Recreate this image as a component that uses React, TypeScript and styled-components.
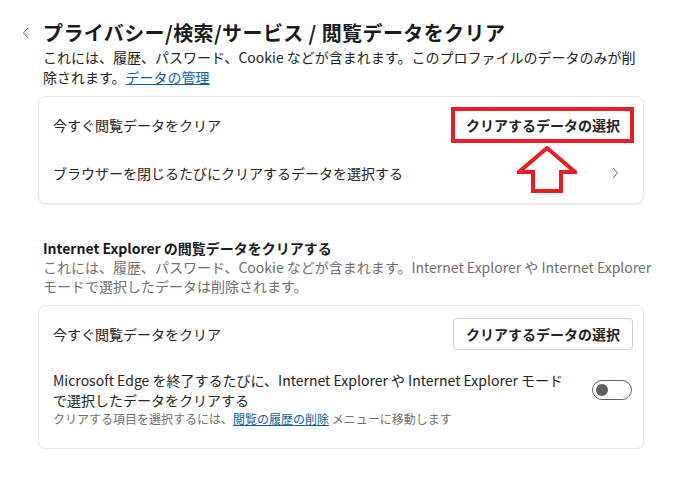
import styled, {createGlobalStyle} from 'styled-components';

const GlobalStyle = createGlobalStyle`
  body {
    margin: 0;
    background: #fff;
    font-family: "Segoe UI", "Noto Sans CJK JP", sans-serif;
    color: #242424;
  }
`;

const Page = styled.main`
  width: 606px;
  padding: 19px 0 0 38px;
`;

const Header = styled.header`
  display: flex;
  align-items: center;
  gap: 13px;
  margin-left: -16px;
`;

const BackIcon = styled.svg`
  width: 8px;
  height: 12px;
  flex: none;
`;

const Title = styled.h1`
  margin: 0;
  font-size: 20px;
  line-height: 28px;
  font-weight: 700;
  letter-spacing: 0.4px;
  color: #1b1b1b;
`;

const Description = styled.p<{muted?: boolean}>`
  margin: 0 ${p => (p.muted ? '-8px' : '0')} 9px 5px;
  font-size: 14px;
  line-height: ${p => (p.muted ? '19px' : '20px')};
  color: ${p => (p.muted ? '#707070' : '#242424')};
`;

const Link = styled.a`
  color: #115ea3;
  text-decoration: underline;
  cursor: pointer;
`;

const SectionTitle = styled.h2`
  margin: 34px 0 0 5px;
  font-size: 14px;
  line-height: 20px;
  font-weight: 700;
  color: #1b1b1b;
`;

const Card = styled.section`
  background: #fff;
  border: 1px solid #e6e6e6;
  border-radius: 8px;
  box-shadow: 0 1px 2px rgba(0, 0, 0, 0.08);
  padding: 4px 0 6px;
`;

const Row = styled.div`
  display: flex;
  align-items: center;
  justify-content: space-between;
  min-height: 48px;
  padding: 0 10px 0 14px;
  font-size: 14px;
  line-height: 20px;
`;

const ToggleRow = styled.div`
  display: flex;
  align-items: flex-start;
  justify-content: space-between;
  gap: 24px;
  padding: 12px 10px 15px 14px;
  font-size: 14px;
  line-height: 20px;
`;

const RowText = styled.div`
  flex: 1;
`;

const SubText = styled.div`
  font-size: 12px;
  line-height: 17px;
  color: #707070;
`;

const Anchor = styled.div`
  position: relative;
`;

const Button = styled.button`
  width: 180px;
  height: 32px;
  background: #fff;
  border: 1px solid #d1d1d1;
  border-radius: 4px;
  font-family: inherit;
  font-size: 14px;
  font-weight: 700;
  color: #242424;
  cursor: pointer;
`;

const Highlight = styled.div`
  position: absolute;
  inset: -2px -1px -2px -2px;
  border: 4px solid #ed1c24;
  pointer-events: none;
`;

const Arrow = styled.svg`
  position: absolute;
  left: 64px;
  top: 37px;
  width: 60px;
  height: 48px;
  z-index: 2;
`;

const Chevron = styled.svg`
  width: 8px;
  height: 12px;
  margin-right: 14px;
`;

const Toggle = styled.div`
  flex: none;
  display: flex;
  align-items: center;
  width: 40px;
  height: 20px;
  box-sizing: border-box;
  margin: 10px 1px 0 0;
  padding: 0 3px;
  border: 1px solid #616161;
  border-radius: 10px;
`;

const Knob = styled.span`
  width: 12px;
  height: 12px;
  border-radius: 50%;
  background: #616161;
`;

export default function App() {
  return (
    <>
      <GlobalStyle />
      <Page>
        <Header>
          <BackIcon viewBox="0 0 8 12">
            <path d="M6 1 L1.5 6 L6 11" fill="none" stroke="#616161" strokeWidth="1" />
          </BackIcon>
          <Title>プライバシー/検索/サービス / 閲覧データをクリア</Title>
        </Header>
        <Description>
          これには、履歴、パスワード、Cookie などが含まれます。このプロファイルのデータのみが削除されます。<Link>データの管理</Link>
        </Description>

        <Card>
          <Row>
            <span>今すぐ閲覧データをクリア</span>
            <Anchor>
              <Button>クリアするデータの選択</Button>
              <Highlight />
              <Arrow viewBox="0 0 60 48">
                <polygon
                  points="30,2 58,26 44,26 44,45 16,45 16,26 2,26"
                  fill="#fff"
                  stroke="#ed1c24"
                  strokeWidth="4"
                  strokeLinejoin="miter"
                />
              </Arrow>
            </Anchor>
          </Row>
          <Row>
            <span>ブラウザーを閉じるたびにクリアするデータを選択する</span>
            <Chevron viewBox="0 0 8 12">
              <path d="M2 1 L6.5 6 L2 11" fill="none" stroke="#616161" strokeWidth="1" />
            </Chevron>
          </Row>
        </Card>

        <SectionTitle>Internet Explorer の閲覧データをクリアする</SectionTitle>
        <Description muted>
          これには、履歴、パスワード、Cookie などが含まれます。Internet Explorer や Internet Explorer モードで選択したデータは削除されます。
        </Description>

        <Card>
          <Row>
            <span>今すぐ閲覧データをクリア</span>
            <Button>クリアするデータの選択</Button>
          </Row>
          <ToggleRow>
            <RowText>
              Microsoft Edge を終了するたびに、Internet Explorer や Internet Explorer モードで選択したデータをクリアする
              <SubText>
                クリアする項目を選択するには、<Link>閲覧の履歴の削除</Link> メニューに移動します
              </SubText>
            </RowText>
            <Toggle>
              <Knob />
            </Toggle>
          </ToggleRow>
        </Card>
      </Page>
    </>
  );
}
